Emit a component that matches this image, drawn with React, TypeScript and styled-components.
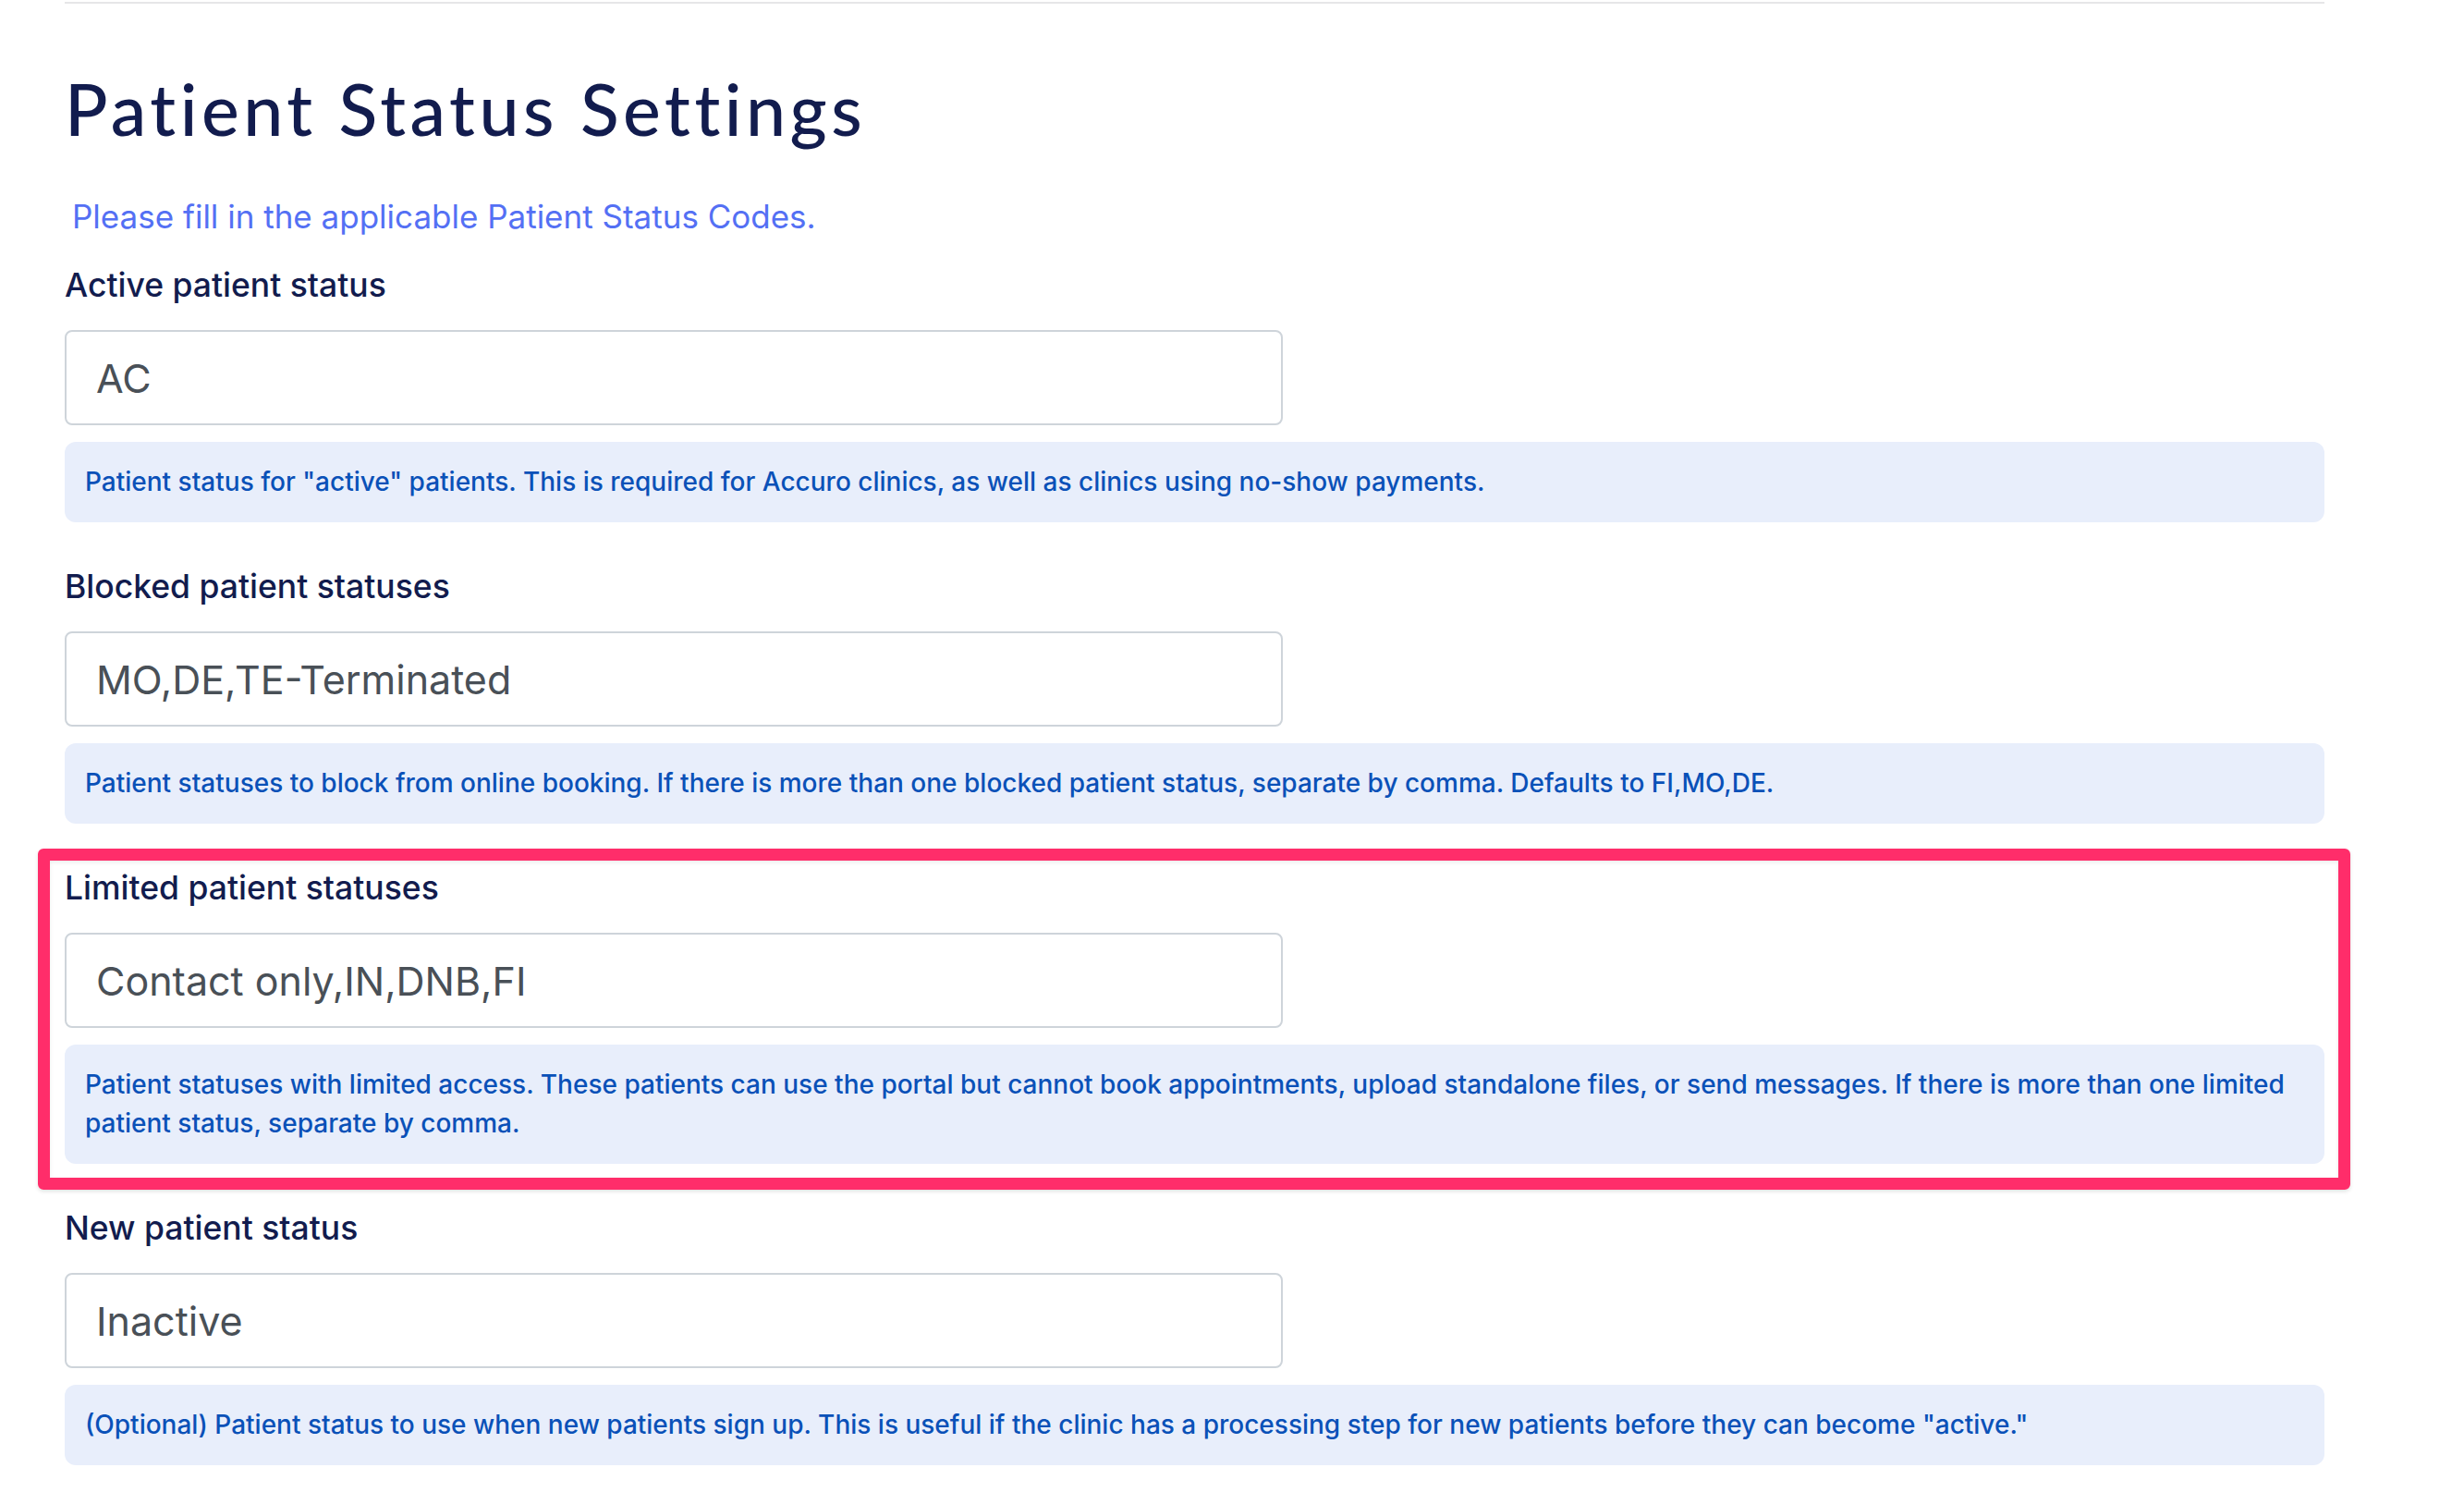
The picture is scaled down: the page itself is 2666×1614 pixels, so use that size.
import React from 'react';
import styled, { createGlobalStyle } from 'styled-components';

const GlobalStyle = createGlobalStyle`
  html, body {
    margin: 0;
    padding: 0;
    background: #ffffff;
  }
  body {
    font-family: Inter, 'Liberation Sans', sans-serif;
  }
`;

interface FieldData {
  label: string;
  value: string;
  help: string;
  highlighted?: boolean;
}

const FIELDS: FieldData[] = [
  {
    label: 'Active patient status',
    value: 'AC',
    help: 'Patient status for "active" patients. This is required for Accuro clinics, as well as clinics using no-show payments.',
  },
  {
    label: 'Blocked patient statuses',
    value: 'MO,DE,TE-Terminated',
    help: 'Patient statuses to block from online booking. If there is more than one blocked patient status, separate by comma. Defaults to FI,MO,DE.',
  },
  {
    label: 'Limited patient statuses',
    value: 'Contact only,IN,DNB,FI',
    help: 'Patient statuses with limited access. These patients can use the portal but cannot book appointments, upload standalone files, or send messages. If there is more than one limited patient status, separate by comma.',
    highlighted: true,
  },
  {
    label: 'New patient status',
    value: 'Inactive',
    help: '(Optional) Patient status to use when new patients sign up. This is useful if the clinic has a processing step for new patients before they can become "active."',
  },
];

const PAGE = styled.main`
  width: 2445px;
  padding: 0 0 40px 70px;
`;

const DIVIDER = styled.hr`
  margin: 2px 0 0;
  border: 0;
  height: 2px;
  background: #e6e6e8;
`;

const TITLE = styled.h1`
  margin: 68px 0 0;
  font-family: Lato, 'Open Sans', sans-serif;
  font-weight: 500;
  font-size: 77px;
  line-height: 91px;
  letter-spacing: 4.5px;
  color: #121c4e;
`;

const INTRO = styled.p`
  margin: 49px 0 0;
  padding-left: 8px;
  font-size: 35px;
  line-height: 44px;
  color: #5470f4;
`;

const FORM = styled.form`
  display: flex;
  flex-direction: column;
  gap: 48px;
  margin-top: 31px;
`;

const FIELD = styled.div<{ $highlighted?: boolean }>`
  position: relative;
  display: flex;
  flex-direction: column;

  ${({ $highlighted }) =>
    $highlighted &&
    `
    &::after {
      content: '';
      position: absolute;
      top: -21px;
      bottom: -28px;
      left: -29px;
      right: -28px;
      border: 13px solid #ff2d6a;
      border-radius: 6px;
      box-shadow: 0 2px 4px rgba(0, 0, 0, 0.12), inset 0 2px 4px rgba(0, 0, 0, 0.08);
      pointer-events: none;
    }
  `}
`;

const LABEL = styled.label`
  font-size: 35.5px;
  line-height: 44px;
  font-weight: 500;
  color: #121c4e;
  margin-bottom: 26px;
`;

const INPUT = styled.input`
  box-sizing: border-box;
  width: 1318px;
  height: 103px;
  padding: 0 32px;
  border: 2px solid #ced4da;
  border-radius: 8px;
  font-family: Inter, 'Liberation Sans', sans-serif;
  font-size: 43px;
  color: #495057;
  background: #ffffff;
  outline: none;
`;

const HELP = styled.div`
  margin-top: 18px;
  padding: 22px 22px 23px;
  border-radius: 12px;
  background: #e8eefb;
  font-size: 28px;
  line-height: 42px;
  font-weight: 500;
  color: #0a51b8;
`;

function Field({ label, value, help, highlighted }: FieldData) {
  return (
    <FIELD $highlighted={highlighted}>
      <LABEL>{label}</LABEL>
      <INPUT defaultValue={value} />
      <HELP>{help}</HELP>
    </FIELD>
  );
}

export default function App(): React.ReactElement {
  return (
    <>
      <GlobalStyle />
      <PAGE>
        <DIVIDER />
        <TITLE>Patient Status Settings</TITLE>
        <INTRO>Please fill in the applicable Patient Status Codes.</INTRO>
        <FORM onSubmit={(e) => e.preventDefault()}>
          {FIELDS.map((f) => (
            <Field key={f.label} {...f} />
          ))}
        </FORM>
      </PAGE>
    </>
  );
}
